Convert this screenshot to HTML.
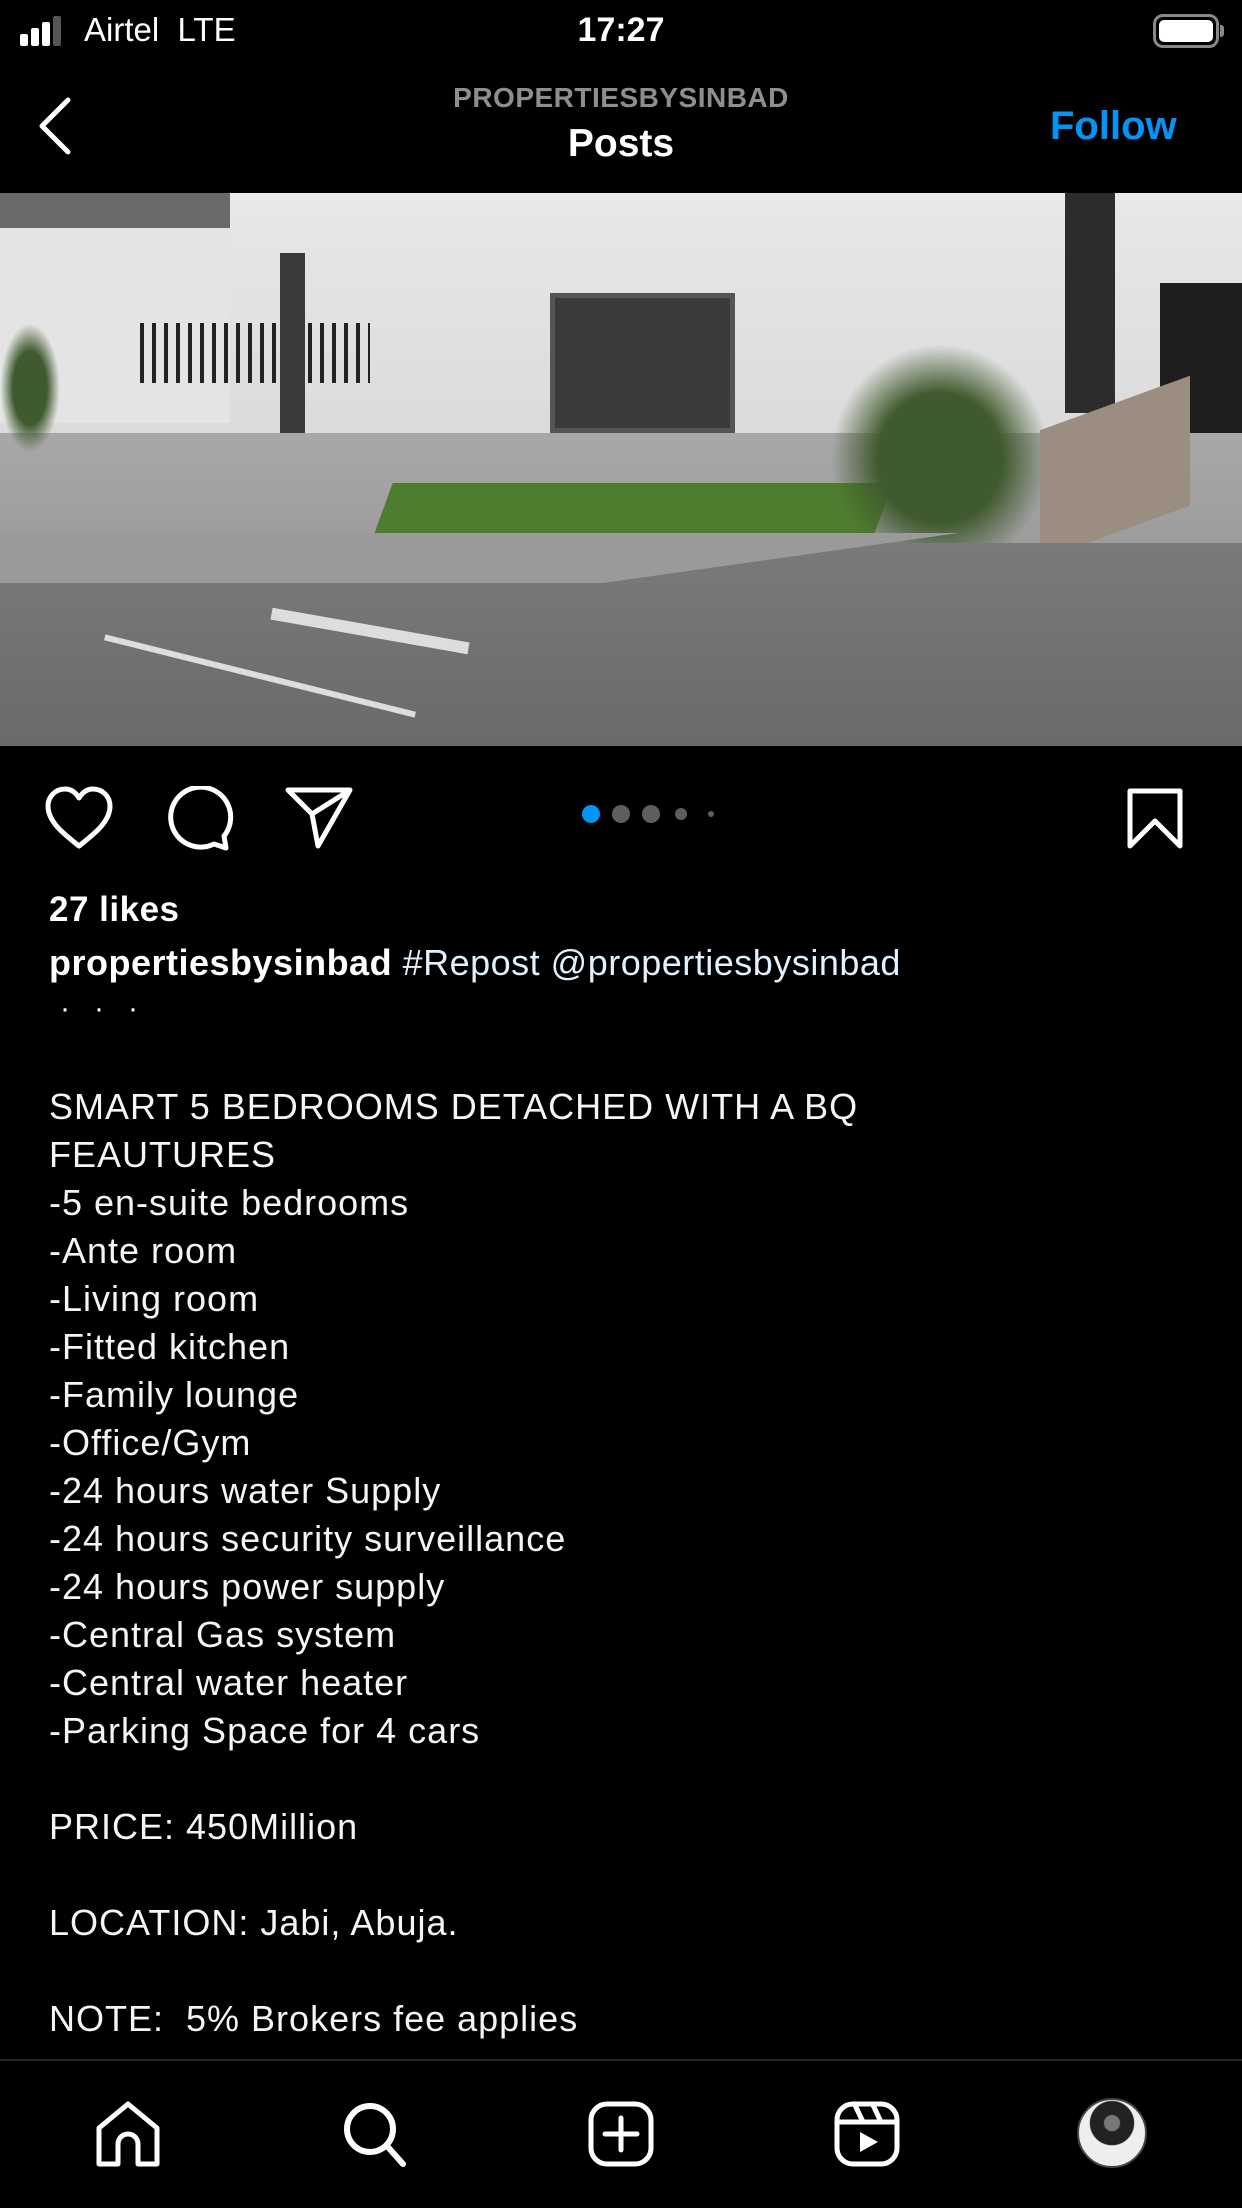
<!DOCTYPE html>
<html><head><meta charset="utf-8">
<style>
*{margin:0;padding:0;box-sizing:border-box}
body{width:1242px;height:2208px;background:#000;color:#fff;font-family:"Liberation Sans",sans-serif;position:relative;overflow:hidden}
.abs{position:absolute}
.cap{position:absolute;left:49px;top:1083px;font-size:36px;line-height:48px;color:#f5f5f5;white-space:pre;letter-spacing:1px}
</style></head><body>
<!-- status bar -->
<div class="abs" style="left:20px;top:16px;width:60px;height:32px">
 <div class="abs" style="left:0;top:18px;width:8px;height:12px;background:#fff;border-radius:2px"></div>
 <div class="abs" style="left:11px;top:12px;width:8px;height:18px;background:#fff;border-radius:2px"></div>
 <div class="abs" style="left:22px;top:6px;width:8px;height:24px;background:#fff;border-radius:2px"></div>
 <div class="abs" style="left:33px;top:0;width:8px;height:30px;background:#555;border-radius:2px"></div>
</div>
<div class="abs" style="left:84px;top:11px;font-size:33px">Airtel&nbsp;&nbsp;LTE</div>
<div class="abs" style="left:0;width:1242px;text-align:center;top:11px;font-size:34px;font-weight:bold">17:27</div>
<div class="abs" style="left:1153px;top:14px;width:66px;height:34px;border:3px solid #888;border-radius:10px"><div style="margin:3px;height:22px;background:#fff;border-radius:5px"></div></div>
<div class="abs" style="left:1220px;top:25px;width:4px;height:12px;background:#888;border-radius:0 3px 3px 0"></div>
<!-- nav -->
<svg class="abs" style="left:34px;top:96px" width="40" height="60" viewBox="0 0 40 60"><path d="M34 4 L8 30 L34 56" fill="none" stroke="#fff" stroke-width="5" stroke-linecap="round" stroke-linejoin="round"/></svg>
<div class="abs" style="left:0;width:1242px;text-align:center;top:82px;font-size:28px;color:#8e8e8e;font-weight:bold;letter-spacing:0.5px">PROPERTIESBYSINBAD</div>
<div class="abs" style="left:0;width:1242px;text-align:center;top:122px;font-size:39px;font-weight:bold">Posts</div>
<div class="abs" style="left:1050px;top:104px;font-size:40px;font-weight:bold;color:#0095f6">Follow</div>
<!-- photo -->
<div class="abs" style="left:0;top:193px;width:1242px;height:553px;overflow:hidden;background:#8a8a8a">
 <div class="abs" style="left:0;top:0;width:1242px;height:300px;background:linear-gradient(#e8e8e8,#d8d8d8)"></div>
 <div class="abs" style="left:0;top:0;width:230px;height:230px;background:#e4e4e4"></div>
 <div class="abs" style="left:0;top:0;width:230px;height:35px;background:#6a6a6a"></div>
 <div class="abs" style="left:140px;top:130px;width:230px;height:60px;background:repeating-linear-gradient(90deg,#222 0 4px,transparent 4px 12px)"></div>
 <div class="abs" style="left:280px;top:60px;width:25px;height:200px;background:#3a3a3a"></div>
 <div class="abs" style="left:550px;top:100px;width:185px;height:140px;background:#3b3b3b;border:5px solid #555"></div>
 <div class="abs" style="left:1065px;top:0;width:50px;height:220px;background:#2c2c2c"></div>
 <div class="abs" style="left:1160px;top:90px;width:82px;height:150px;background:#1e1e1e"></div>
 <div class="abs" style="left:0;top:240px;width:1242px;height:140px;background:linear-gradient(#a8a8a8,#9a9a9a)"></div>
 <div class="abs" style="left:380px;top:290px;width:500px;height:70px;background:#4f7d2f;transform:skewX(-20deg)"></div>
 <div class="abs" style="left:830px;top:150px;width:220px;height:230px;background:radial-gradient(ellipse,#3f5a2e 40%,transparent 70%)"></div>
 <div class="abs" style="left:0;top:130px;width:60px;height:130px;background:radial-gradient(ellipse,#3f5a2e 40%,transparent 70%)"></div>
 <div class="abs" style="left:1040px;top:210px;width:150px;height:130px;background:#9b8d80;transform:skewY(-20deg)"></div>
 <div class="abs" style="left:0;top:350px;width:1242px;height:203px;background:linear-gradient(#7a7a7a,#6a6a6a)"></div>
 <div class="abs" style="left:0;top:340px;width:1242px;height:50px;background:linear-gradient(172deg,#9a9a9a 60%,transparent 60%)"></div>
 <div class="abs" style="left:100px;top:480px;width:320px;height:6px;background:#ddd;transform:rotate(14deg)"></div>
 <div class="abs" style="left:270px;top:432px;width:200px;height:12px;background:#ddd;transform:rotate(10deg)"></div>
</div>
<!-- action row -->
<svg class="abs" style="left:44px;top:786px" width="70" height="64" viewBox="0 0 70 64"><path d="M35 60 C20 48 4 36 4 20 C4 10 12 3 21 3 C28 3 32 7 35 12 C38 7 42 3 49 3 C58 3 66 10 66 20 C66 36 50 48 35 60Z" fill="none" stroke="#fff" stroke-width="5" stroke-linejoin="round"/></svg>
<svg class="abs" style="left:164px;top:786px" width="70" height="66" viewBox="0 0 70 66"><path d="M60 50 A30 30 0 1 0 50 58 L62 62 Z" fill="none" stroke="#fff" stroke-width="5" stroke-linejoin="round"/></svg>
<svg class="abs" style="left:284px;top:786px" width="70" height="64" viewBox="0 0 70 64"><path d="M4 4 L66 4 L34 60 L28 28 Z M28 28 L66 4" fill="none" stroke="#fff" stroke-width="5" stroke-linejoin="round"/></svg>
<div class="abs" style="left:582px;top:805px;width:18px;height:18px;border-radius:50%;background:#0095f6"></div>
<div class="abs" style="left:612px;top:805px;width:18px;height:18px;border-radius:50%;background:#5e5e5e"></div>
<div class="abs" style="left:642px;top:805px;width:18px;height:18px;border-radius:50%;background:#5e5e5e"></div>
<div class="abs" style="left:675px;top:808px;width:12px;height:12px;border-radius:50%;background:#5e5e5e"></div>
<div class="abs" style="left:708px;top:811px;width:6px;height:6px;border-radius:50%;background:#5e5e5e"></div>
<svg class="abs" style="left:1126px;top:788px" width="58" height="62" viewBox="0 0 58 62"><path d="M4 3 L54 3 L54 58 L29 33 L4 58 Z" fill="none" stroke="#fff" stroke-width="5" stroke-linejoin="round"/></svg>
<!-- text -->
<div class="abs" style="left:49px;top:890px;font-size:35px;font-weight:bold;letter-spacing:0.5px">27 likes</div>
<div class="abs" style="left:49px;top:942px;font-size:36px;letter-spacing:0.5px"><b>propertiesbysinbad</b> <span style="color:#e0f1ff">#Repost @propertiesbysinbad</span></div>
<div class="abs" style="left:60px;top:992px;font-size:30px;letter-spacing:24px">···</div>
<div class="cap">SMART 5 BEDROOMS DETACHED WITH A BQ
FEAUTURES
-5 en-suite bedrooms
-Ante room
-Living room
-Fitted kitchen
-Family lounge
-Office/Gym
-24 hours water Supply
-24 hours security surveillance
-24 hours power supply
-Central Gas system
-Central water heater
-Parking Space for 4 cars

PRICE: 450Million

LOCATION: Jabi, Abuja.

NOTE:  5% Brokers fee applies</div>
<!-- bottom bar -->
<div class="abs" style="left:0;top:2059px;width:1242px;height:149px;background:#000;border-top:2px solid #262626"></div>
<svg class="abs" style="left:94px;top:2100px" width="68" height="68" viewBox="0 0 68 68"><path d="M5 64 L5 28 L34 4 L63 28 L63 64 L44 64 L44 44 A10 10 0 0 0 24 44 L24 64 Z" fill="none" stroke="#fff" stroke-width="5" stroke-linejoin="round"/></svg>
<svg class="abs" style="left:341px;top:2100px" width="68" height="68" viewBox="0 0 68 68"><circle cx="29" cy="29" r="23" fill="none" stroke="#fff" stroke-width="6"/><path d="M46 46 L62 64" stroke="#fff" stroke-width="6" stroke-linecap="round"/></svg>
<svg class="abs" style="left:587px;top:2100px" width="68" height="68" viewBox="0 0 68 68"><rect x="4" y="4" width="60" height="60" rx="16" fill="none" stroke="#fff" stroke-width="5"/><path d="M34 18 L34 50 M18 34 L50 34" stroke="#fff" stroke-width="5" stroke-linecap="round"/></svg>
<svg class="abs" style="left:833px;top:2100px" width="68" height="68" viewBox="0 0 68 68"><rect x="4" y="4" width="60" height="60" rx="16" fill="none" stroke="#fff" stroke-width="5"/><path d="M4 22 L64 22 M22 5 L30 22 M40 5 L48 22" stroke="#fff" stroke-width="5"/><path d="M27 32 L45 42 L27 52 Z" fill="#fff"/></svg>
<div class="abs" style="left:1077px;top:2098px;width:70px;height:70px;border-radius:50%;background:radial-gradient(circle at 50% 35%,#777 0 14%,#222 16% 40%,#eee 42%);border:2px solid #444"></div>
</body></html>
